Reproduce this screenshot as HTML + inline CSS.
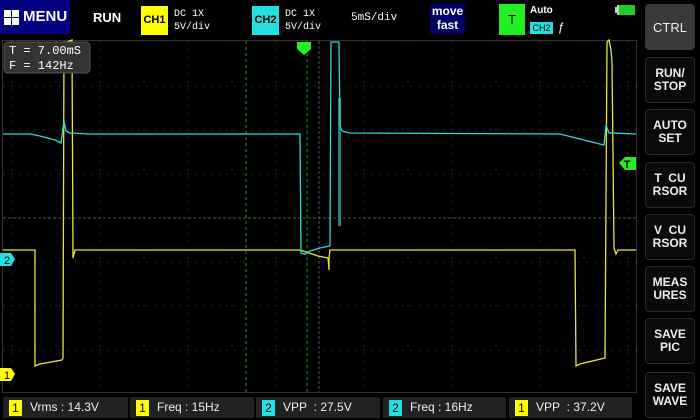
<!DOCTYPE html>
<html><head><style>
body{margin:0;width:700px;height:420px;background:#000;overflow:hidden;position:relative;font-family:"Liberation Sans",sans-serif;color:#fff}
.a{position:absolute}
.btn{position:absolute;left:645px;width:48px;height:44px;border:1px solid #2a2a2a;border-radius:4px;background:#0a0a0a;color:#eee;font-size:12px;font-weight:bold;text-align:center;line-height:13px;display:flex;align-items:center;justify-content:center}
.m{position:absolute;top:397px;height:21px;background:#222;border-radius:2px;font-size:12px;color:#eee;line-height:21px;font-family:"Liberation Sans Narrow","Liberation Sans",sans-serif}
.m b{display:inline-block;width:13px;height:16px;margin:3px 8px 0 6px;line-height:16px;text-align:center;color:#000;font-weight:normal;vertical-align:top}
.y{background:#ffff00}.c{background:#22e0e0}
.mono{font-family:"Liberation Mono",monospace}
</style></head><body>
<div class="a" style="left:0;top:0;width:70px;height:34px;background:#000080"></div>
<svg class="a" style="left:4px;top:10px" width="16" height="16"><rect x="0" y="0" width="7" height="7" fill="#fff"/><rect x="8" y="0" width="7" height="7" fill="#fff"/><rect x="0" y="8" width="7" height="7" fill="#fff"/><rect x="8" y="8" width="7" height="7" fill="#fff"/></svg>
<div class="a" style="left:23px;top:8px;font-size:15px;font-weight:bold">MENU</div>
<div class="a" style="left:93px;top:10px;font-size:13px;font-weight:bold">RUN</div>
<div class="a y" style="left:141px;top:6px;width:27px;height:29px;color:#000;font-size:11px;line-height:29px;text-align:center;font-weight:bold">CH1</div>
<div class="a mono" style="left:174px;top:8px;font-size:10px;line-height:13px">DC  1X<br>5V/div</div>
<div class="a c" style="left:252px;top:6px;width:27px;height:29px;color:#000;font-size:11px;line-height:29px;text-align:center;font-weight:bold">CH2</div>
<div class="a mono" style="left:285px;top:8px;font-size:10px;line-height:13px">DC  1X<br>5V/div</div>
<div class="a mono" style="left:351px;top:12px;font-size:11px">5mS/div</div>
<div class="a" style="left:430px;top:4px;width:35px;height:30px;background:#000066;font-size:12px;line-height:14px;text-align:center;font-weight:bold">move<br>fast</div>
<div class="a" style="left:499px;top:4px;width:26px;height:31px;background:#22ee22;color:#000;font-size:13px;line-height:31px;text-align:center">T</div>
<div class="a" style="left:530px;top:5px;font-size:10px;font-weight:bold">Auto</div>
<div class="a c" style="left:530px;top:22px;width:23px;height:12px;color:#000;font-size:9px;line-height:12px;text-align:center">CH2</div>
<div class="a" style="left:558px;top:20px;font-size:12px">ƒ</div>
<div class="a" style="left:617px;top:5px;width:17px;height:10px;background:#ccc"></div>
<div class="a" style="left:619px;top:5px;width:16px;height:10px;background:#22cc22"></div>
<div class="a" style="left:615px;top:7px;width:2px;height:6px;background:#ccc"></div>

<svg class="a" style="left:0;top:0" width="640" height="420">
<rect x="2.5" y="40.5" width="634" height="352" fill="none" stroke="#333" stroke-width="1"/>
<g stroke="#444" stroke-width="1" stroke-dasharray="1,7">
<line x1="12" y1="41" x2="12" y2="392"/><line x1="56" y1="41" x2="56" y2="392"/><line x1="100" y1="41" x2="100" y2="392"/><line x1="144" y1="41" x2="144" y2="392"/><line x1="188" y1="41" x2="188" y2="392"/><line x1="232" y1="41" x2="232" y2="392"/><line x1="276" y1="41" x2="276" y2="392"/><line x1="364" y1="41" x2="364" y2="392"/><line x1="408" y1="41" x2="408" y2="392"/><line x1="452" y1="41" x2="452" y2="392"/><line x1="496" y1="41" x2="496" y2="392"/><line x1="540" y1="41" x2="540" y2="392"/><line x1="584" y1="41" x2="584" y2="392"/><line x1="628" y1="41" x2="628" y2="392"/>
<line x1="3" y1="86" x2="636" y2="86"/><line x1="3" y1="130" x2="636" y2="130"/><line x1="3" y1="174" x2="636" y2="174"/><line x1="3" y1="262" x2="636" y2="262"/><line x1="3" y1="306" x2="636" y2="306"/><line x1="3" y1="350" x2="636" y2="350"/>
</g>
<g stroke="#555" stroke-dasharray="3,2"><line x1="3" y1="218" x2="636" y2="218"/><line x1="319" y1="41" x2="319" y2="392"/></g>
<g stroke="#1a9a1a" stroke-dasharray="3,3"><line x1="246" y1="41" x2="246" y2="392"/><line x1="307" y1="41" x2="307" y2="392"/></g>
<rect x="338" y="98" width="3" height="128" fill="#2a8080"/>
<polyline fill="none" stroke="#e8e830" stroke-width="1.3" points="3,250 35,250 35,366 40,364 62,360 63,358 64,42 67,42 72,40 73,258 75,250 120,250 300,250 306,252 318,256 328,258 329,270 329,258 330,250 340,250 345,250 575,250 576,366 580,364 605,358 607,42 609,40 611,50 612,62 614,248 616,254 618,250 636,250"/>
<polyline fill="none" stroke="#30d8d8" stroke-width="1.3" points="3,134 30,134 40,136 55,140 61,143 64,121 66,131 70,133 90,134 300,134 301,253 305,254 310,251 320,248 330,246 331,42 339,42 340,126 342,131 350,133 560,134 580,139 604,145 606,125 609,133 613,133 636,134"/>
<polygon points="297,42 311,42 311,49 304,55 297,49" fill="#22ee22"/>
<polygon points="619,163 625,157 636,157 636,170 625,170" fill="#22ee22"/>
<text x="627" y="168" font-size="11" font-weight="bold" fill="#000" text-anchor="middle" font-family="Liberation Sans">T</text>
<polygon points="0,253 11,253 15,259 11,266 0,266" fill="#22e0e0"/>
<text x="4" y="264" font-size="11" fill="#000" font-family="Liberation Sans">2</text>
<polygon points="0,368 11,368 15,374 11,381 0,381" fill="#ffff00"/>
<text x="4" y="379" font-size="11" fill="#000" font-family="Liberation Sans">1</text>
<rect x="4" y="42" width="86" height="31" rx="4" fill="#333" stroke="#555"/>
<text x="9" y="54" font-size="12" fill="#fff" font-family="Liberation Mono" xml:space="preserve">T = 7.00mS</text>
<text x="9" y="69" font-size="12" fill="#fff" font-family="Liberation Mono" xml:space="preserve">F = 142Hz</text>
</svg>

<div class="btn" style="top:4px;background:#3a3a3a;border-color:#3a3a3a;font-size:13px;font-weight:normal">CTRL</div>
<div class="btn" style="top:57px">RUN/<br>STOP</div>
<div class="btn" style="top:109px">AUTO<br>SET</div>
<div class="btn" style="top:162px">T&nbsp;&nbsp;CU<br>RSOR</div>
<div class="btn" style="top:214px">V&nbsp;&nbsp;CU<br>RSOR</div>
<div class="btn" style="top:266px">MEAS<br>URES</div>
<div class="btn" style="top:318px">SAVE<br>PIC</div>
<div class="btn" style="top:372px">SAVE<br>WAVE</div>

<div class="m" style="left:3px;width:125px"><b class="y">1</b>Vrms : 14.3V</div>
<div class="m" style="left:130px;width:124px"><b class="y">1</b>Freq : 15Hz</div>
<div class="m" style="left:256px;width:124px"><b class="c">2</b>VPP&nbsp; : 27.5V</div>
<div class="m" style="left:383px;width:123px"><b class="c">2</b>Freq : 16Hz</div>
<div class="m" style="left:509px;width:123px"><b class="y">1</b>VPP&nbsp; : 37.2V</div>
</body></html>
